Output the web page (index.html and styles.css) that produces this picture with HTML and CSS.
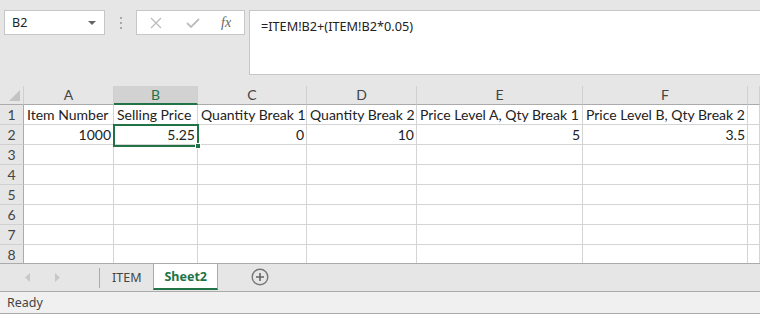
FILE: index.html
```html
<!DOCTYPE html>
<html>
<head>
    <meta charset="UTF-8">
    <title>Sheet2</title>
    <link rel="stylesheet" href="styles.css">
</head>
<body>
    <div class="toolbar">
        <div class="name-box">
            <span>B2</span>
            <span class="drop"></span>
        </div>
        <div class="grip">
            <i></i><i></i><i></i>
        </div>
        <div class="fx-buttons">
            <svg width="14" height="14" viewBox="0 0 14 14"><path d="M2 2 L12 12 M12 2 L2 12" stroke="#bdbdbd" stroke-width="1.4" fill="none"/></svg>
            <svg width="16" height="14" viewBox="0 0 16 14"><path d="M2 7 L6 11 L14 3" stroke="#bdbdbd" stroke-width="1.8" fill="none"/></svg>
            <span class="fx">fx</span>
        </div>
        <div class="formula">=ITEM!B2+(ITEM!B2*0.05)</div>
    </div>

    <div class="sheet">
        <div class="grid">
            <div class="hd corner"><span class="tri"></span></div>
            <div class="hd">A</div>
            <div class="hd sel">B</div>
            <div class="hd">C</div>
            <div class="hd">D</div>
            <div class="hd">E</div>
            <div class="hd">F</div>
            <div class="hd"></div>

            <div class="rh">1</div>
            <div class="c">Item Number</div>
            <div class="c">Selling Price</div>
            <div class="c">Quantity Break 1</div>
            <div class="c">Quantity Break 2</div>
            <div class="c">Price Level A, Qty Break 1</div>
            <div class="c">Price Level B, Qty Break 2</div>
            <div class="c"></div>

            <div class="rh">2</div>
            <div class="c num">1000</div>
            <div class="c num">5.25</div>
            <div class="c num">0</div>
            <div class="c num">10</div>
            <div class="c num">5</div>
            <div class="c num">3.5</div>
            <div class="c"></div>

            <div class="rh">3</div>
            <div class="c"></div><div class="c"></div><div class="c"></div><div class="c"></div><div class="c"></div><div class="c"></div><div class="c"></div>
            <div class="rh">4</div>
            <div class="c"></div><div class="c"></div><div class="c"></div><div class="c"></div><div class="c"></div><div class="c"></div><div class="c"></div>
            <div class="rh">5</div>
            <div class="c"></div><div class="c"></div><div class="c"></div><div class="c"></div><div class="c"></div><div class="c"></div><div class="c"></div>
            <div class="rh">6</div>
            <div class="c"></div><div class="c"></div><div class="c"></div><div class="c"></div><div class="c"></div><div class="c"></div><div class="c"></div>
            <div class="rh">7</div>
            <div class="c"></div><div class="c"></div><div class="c"></div><div class="c"></div><div class="c"></div><div class="c"></div><div class="c"></div>
            <div class="rh">8</div>
            <div class="c"></div><div class="c"></div><div class="c"></div><div class="c"></div><div class="c"></div><div class="c"></div><div class="c"></div>
        </div>
        <div class="selection"><span class="handle"></span></div>
    </div>

    <div class="tabbar">
        <div class="nav">
            <svg width="6" height="9" viewBox="0 0 6 9"><path d="M5 0 L0 4.5 L5 9 Z" fill="#c8c8c8"/></svg>
            <svg width="6" height="9" viewBox="0 0 6 9"><path d="M1 0 L6 4.5 L1 9 Z" fill="#c8c8c8"/></svg>
        </div>
        <div class="tab">ITEM</div>
        <div class="tab active">Sheet2</div>
        <svg class="add" width="18" height="18" viewBox="0 0 18 18">
            <circle cx="9" cy="9" r="7.8" stroke="#777" stroke-width="1.4" fill="none"/>
            <path d="M9 5 V13 M5 9 H13" stroke="#666" stroke-width="1.6"/>
        </svg>
    </div>

    <div class="status">Ready</div>
</body>
</html>
```

FILE: styles.css
```css
* {
    box-sizing: border-box;
    margin: 0;
    padding: 0;
}

body {
    width: 760px;
    height: 314px;
    overflow: hidden;
    background: #e6e6e6;
    font-family: 'Noto Sans', 'Open Sans', sans-serif;
}

.toolbar {
    height: 86px;
    display: flex;
    align-items: flex-start;
    padding: 10px 0 0 4px;
}

.name-box {
    width: 101px;
    height: 25px;
    background: #fff;
    border: 1px solid #c6c6c6;
    display: flex;
    align-items: center;
    justify-content: space-between;
    padding: 0 8px 0 7px;
    font-size: 12.5px;
    color: #222;
}

.drop {
    width: 0;
    height: 0;
    border-left: 4px solid transparent;
    border-right: 4px solid transparent;
    border-top: 4px solid #666;
}

.grip {
    width: 31px;
    height: 25px;
    display: flex;
    flex-direction: column;
    align-items: center;
    justify-content: center;
    gap: 3px;
}

.grip i {
    width: 2px;
    height: 2px;
    background: #a8a8a8;
}

.fx-buttons {
    width: 109px;
    height: 25px;
    background: #fff;
    border: 1px solid #c6c6c6;
    display: flex;
    align-items: center;
    padding-left: 12px;
    gap: 22px;
}

.fx {
    font-family: 'Liberation Serif', serif;
    font-style: italic;
    font-size: 14px;
    color: #666;
    margin-left: -2px;
}

.formula {
    margin-left: 4px;
    flex: 1;
    height: 65px;
    background: #fff;
    border: 1px solid #c6c6c6;
    border-right: none;
    padding: 6px 0 0 11px;
    font-size: 12.7px;
    color: #222;
}

.sheet {
    position: relative;
    height: 177px;
    overflow: hidden;
    background: #fff;
}

.grid {
    display: grid;
    grid-template-columns: 24px 90px 84px 109px 110px 166px 165px 1fr;
    grid-template-rows: 19px repeat(8, 20px);
    font-family: 'Lato', 'Liberation Sans', sans-serif;
    font-size: 14px;
    color: #222;
}

.hd {
    background: #e6e6e6;
    border-right: 1px solid #d0d0d0;
    border-bottom: 1px solid #ababab;
    text-align: center;
    line-height: 18px;
    color: #444;
}

.hd.sel {
    background: #d2d2d2;
    color: #217346;
    border-bottom: 2px solid #217346;
}

.corner {
    position: relative;
}

.tri {
    position: absolute;
    right: 3px;
    bottom: 3px;
    width: 0;
    height: 0;
    border-left: 11px solid transparent;
    border-bottom: 11px solid #c3c3c3;
}

.rh {
    background: #e6e6e6;
    border-right: 1px solid #ababab;
    border-bottom: 1px solid #d0d0d0;
    text-align: center;
    line-height: 20px;
    color: #444;
}

.c {
    border-right: 1px solid #d4d4d4;
    border-bottom: 1px solid #d4d4d4;
    padding: 0 2px 0 3px;
    line-height: 20px;
    white-space: nowrap;
    overflow: hidden;
}

.num {
    text-align: right;
}

.selection {
    position: absolute;
    left: 113px;
    top: 38px;
    width: 86px;
    height: 23px;
    border: 2px solid #217346;
}

.handle {
    position: absolute;
    right: -4px;
    bottom: -4px;
    width: 6px;
    height: 6px;
    background: #217346;
    border: 1px solid #fff;
}

.tabbar {
    height: 28px;
    border-top: 1px solid #ababab;
    display: flex;
    align-items: flex-start;
    font-size: 12.5px;
}

.nav {
    width: 99px;
    height: 26px;
    display: flex;
    align-items: center;
    padding-left: 25px;
    gap: 23px;
}

.tab {
    padding: 0 12px;
    border-left: 1px solid #ababab;
    color: #444;
    margin-top: 4px;
    line-height: 19px;
    height: 20px;
}

.tab.active {
    margin-top: 0;
    height: 26px;
    line-height: 25px;
    background: #fff;
    color: #217346;
    font-weight: bold;
    border-right: 1px solid #ababab;
    border-bottom: 2px solid #217346;
    padding: 0 10px;
}

.add {
    margin: 4px 0 0 33px;
}

.status {
    height: 23px;
    border-top: 1px solid #ababab;
    border-bottom: 1px solid #ababab;
    background: #f0f0f0;
    font-size: 12.5px;
    color: #444;
    padding: 2px 0 0 7px;
}
```
